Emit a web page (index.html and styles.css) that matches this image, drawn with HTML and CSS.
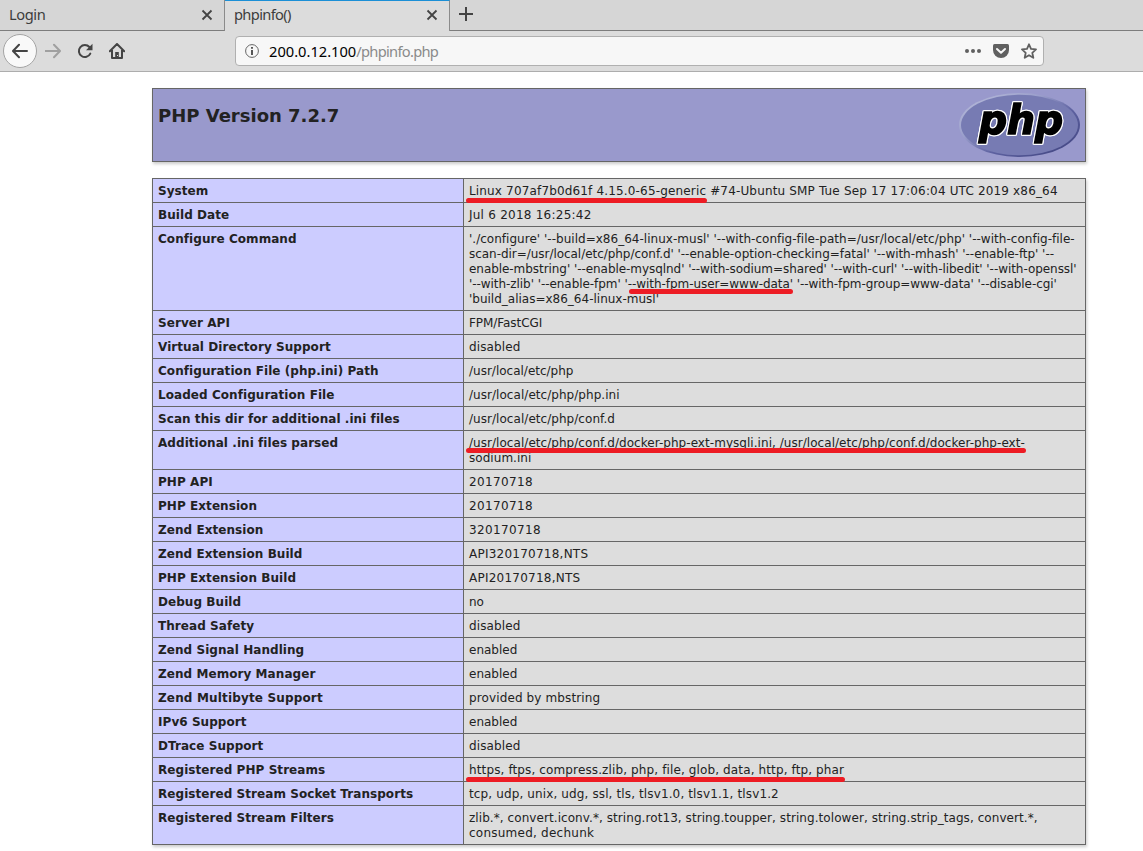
FILE: index.html
```html
<!DOCTYPE html>
<html lang="en">
<head>
<meta charset="utf-8">
<title>phpinfo()</title>
<link rel="stylesheet" href="styles.css">
</head>
<body>
<div class="tabs">
  <div class="tab">
    <span class="tab-title">Login</span>
    <svg class="close" width="12" height="12" viewBox="0 0 12 12"><path d="M1.5 1.5l9 9M10.5 1.5l-9 9"/></svg>
  </div>
  <div class="tab tab-active">
    <span class="tab-title tight">phpinfo()</span>
    <svg class="close" width="12" height="12" viewBox="0 0 12 12"><path d="M1.5 1.5l9 9M10.5 1.5l-9 9"/></svg>
  </div>
  <div class="tab-rest"><svg class="plus" width="14" height="14" viewBox="0 0 14 14"><path d="M7 0v14M0 7h14"/></svg></div>
</div>
<div class="toolbar">
  <div class="back"><svg width="16" height="16" viewBox="0 0 16 16"><path class="ink" d="M15 8H1.5M7 1.8L1 8l6 6.2"/></svg></div>
  <svg class="forward" width="16" height="16" viewBox="0 0 16 16"><path class="ink faint" d="M0 8h14.5M9 1.8L15 8l-6 6.2"/></svg>
  <svg class="reload" width="16" height="16" viewBox="0 0 16 16"><path class="ink" d="M13.3 10.6A6 6 0 1 1 12.4 4"/><path class="solid" d="M15.5 .8v6.4H9z"/></svg>
  <svg class="home" width="16" height="16" viewBox="0 0 16 16"><path class="ink" d="M.8 8.2L8 1l7.200 7.200M3 7v8h10V7"/><path class="solid" d="M6.200 9h3.600v6H6.200z"/><path class="dot" d="M8 12h1v1H8z"/></svg>
  <div class="urlbar">
    <svg class="info" width="14" height="14" viewBox="0 0 14 14"><circle cx="7" cy="7" r="6.400"/><path class="solid" d="M6.100 3h1.800v1.700H6.100zM6.100 6h1.800v5H6.100z"/></svg>
    <span class="url"><span class="host">200.0.12.100</span><span class="path">/phpinfo.php</span></span>
    <svg class="dots" width="16" height="16" viewBox="0 0 16 16"><circle cx="2" cy="8" r="2"/><circle cx="8" cy="8" r="2"/><circle cx="14" cy="8" r="2"/></svg>
    <svg class="pocket" width="16" height="16" viewBox="0 0 16 16"><path d="M1.500 1h13Q16 1 16 2.500V7a8 8 0 0 1-16 0V2.500Q0 1 1.500 1z"/><path class="check" d="M4 6l4 3.800L12 6"/></svg>
    <svg class="star" width="16" height="16" viewBox="0 0 16 16"><path d="M8 1.300l2 4.600 5 .5-3.700 3.400 1 5L8 12.200l-4.300 2.600 1-5L1 6.400l5-.5z"/></svg>
  </div>
</div>
<main class="page">
  <header class="banner">
    <h1>PHP Version 7.2.7</h1>
    <svg class="logo" width="122" height="64" viewBox="0 0 122 64">
      <defs>
        <linearGradient id="rim" x1="0.1" y1="0.2" x2="0.8" y2="0.9"><stop offset="0" stop-color="#aeb2d5"/><stop offset=".3" stop-color="#9a9ecb"/><stop offset=".65" stop-color="#5d61a0"/><stop offset="1" stop-color="#484c89"/></linearGradient>
      </defs>
      <ellipse cx="60.500" cy="32" rx="60.500" ry="32" fill="url(#rim)"/>
      <ellipse cx="60.500" cy="32" rx="58.500" ry="30.300" fill="#777bb3"/>
      <text class="logo-text" x="20" y="40.500" textLength="84" lengthAdjust="spacingAndGlyphs">php</text>
    </svg>
  </header>
  <table>
    <colgroup><col class="key"><col></colgroup>
    <tr><th>System</th><td class="track-4">Linux 707af7b0d61f 4.15.0-65-generic #74-Ubuntu SMP Tue Sep 17 17:06:04 UTC 2019 x86_64</td></tr>
    <tr><th>Build Date</th><td class="track-5">Jul 6 2018 16:25:42</td></tr>
    <tr><th>Configure Command</th><td><span class="track-1">'./configure' '--build=x86_64-linux-musl' '--with-config-file-path=/usr/local/etc/php' '--with-config-file-</span><br><span class="tight-1">scan-dir=/usr/local/etc/php/conf.d' '--enable-option-checking=fatal' '--with-mhash' '--enable-ftp' '--</span><br><span class="tight-2">enable-mbstring' '--enable-mysqlnd' '--with-sodium=shared' '--with-curl' '--with-libedit' '--with-openssl'</span><br><span class="tight-2">'--with-zlib' '--enable-fpm' '--with-fpm-user=www-data' '--with-fpm-group=www-data' '--disable-cgi'</span><br>'build_alias=x86_64-linux-musl'</td></tr>
    <tr><th>Server API</th><td class="tight-2">FPM/FastCGI</td></tr>
    <tr><th>Virtual Directory Support</th><td class="track-3">disabled</td></tr>
    <tr><th>Configuration File (php.ini) Path</th><td>/usr/local/etc/php</td></tr>
    <tr><th>Loaded Configuration File</th><td class="track-2">/usr/local/etc/php/php.ini</td></tr>
    <tr><th>Scan this dir for additional .ini files</th><td class="track-2">/usr/local/etc/php/conf.d</td></tr>
    <tr><th>Additional .ini files parsed</th><td class="track-2">/usr/local/etc/php/conf.d/docker-php-ext-mysqli.ini, /usr/local/etc/php/conf.d/docker-php-ext-<br>sodium.ini</td></tr>
    <tr><th>PHP API</th><td class="track-6">20170718</td></tr>
    <tr><th>PHP Extension</th><td class="track-6">20170718</td></tr>
    <tr><th>Zend Extension</th><td class="track-6">320170718</td></tr>
    <tr><th>Zend Extension Build</th><td class="track-5">API320170718,NTS</td></tr>
    <tr><th>PHP Extension Build</th><td class="track-5">API20170718,NTS</td></tr>
    <tr><th>Debug Build</th><td>no</td></tr>
    <tr><th>Thread Safety</th><td class="track-3">disabled</td></tr>
    <tr><th>Zend Signal Handling</th><td>enabled</td></tr>
    <tr><th>Zend Memory Manager</th><td>enabled</td></tr>
    <tr><th class="track-4">Zend Multibyte Support</th><td class="track-3">provided by mbstring</td></tr>
    <tr><th>IPv6 Support</th><td>enabled</td></tr>
    <tr><th>DTrace Support</th><td class="track-3">disabled</td></tr>
    <tr><th>Registered PHP Streams</th><td class="track-3">https, ftps, compress.zlib, php, file, glob, data, http, ftp, phar</td></tr>
    <tr><th>Registered Stream Socket Transports</th><td class="track-3">tcp, udp, unix, udg, ssl, tls, tlsv1.0, tlsv1.1, tlsv1.2</td></tr>
    <tr><th>Registered Stream Filters</th><td><span class="track-filters">zlib.*, convert.iconv.*, string.rot13, string.toupper, string.tolower, string.strip_tags, convert.*,</span><br><span class="track-5">consumed, dechunk</span></td></tr>
  </table>
</main>
<svg class="marks" width="1143" height="851" viewBox="0 0 1143 851"><path d="M468.500 200.500H704.500M631.500 291.500H790.500M468.500 450.500H1023.500M468.500 779.500H842.500"/></svg>
</body>
</html>
```
FILE: styles.css
```css
* { box-sizing: border-box; }
body {
  margin: 0;
  height: 851px;
  overflow: hidden;
  position: relative;
  background: #fff;
  color: #222;
  font-family: "DejaVu Sans", sans-serif;
}
svg { display: block; flex: none; }

/* Browser chrome */
.tabs {
  display: flex;
  height: 31px;
  background: #d6d6d6;
  font: 14.67px/20px "Noto Sans", sans-serif;
  color: #3c3c3c;
}
.tab {
  display: flex;
  justify-content: space-between;
  width: 225px;
  padding: 4px 11px 0 9px;
  border-right: 1px solid #8b8b8b;
  border-bottom: 1px solid #7d7d7d;
}
.tab-title { letter-spacing: -0.4px; }
.tab-title.tight { letter-spacing: -0.65px; }
.tab-active {
  padding-top: 3px;
  border-top: 1px solid #1b8fd6;
  border-bottom: 0;
  background: #dcdcdc;
}
.close { margin-top: 5px; fill: none; stroke: #444; stroke-width: 1.8; }
.tab-rest { flex: 1; border-bottom: 1px solid #7d7d7d; padding: 7px 0 0 9px; }
.plus { stroke: #444; stroke-width: 2; }
.toolbar {
  display: flex;
  align-items: center;
  height: 41px;
  padding-left: 3px;
  border-bottom: 1px solid #adadad;
  background: #dcdcdc;
}
.back {
  display: grid;
  place-items: center;
  width: 34px;
  height: 34px;
  border: 1px solid #a4a4a4;
  border-radius: 50%;
  background: #f9f9f9;
}
.ink { fill: none; stroke: #444; stroke-width: 2; stroke-linejoin: round; stroke-linecap: round; }
.faint { stroke: #a0a0a0; }
.solid { fill: #444; }
.dot { fill: #dcdcdc; }
.forward { margin-left: 8px; }
.reload { margin-left: 16px; }
.home { margin-left: 16px; }
.urlbar {
  display: flex;
  align-items: center;
  width: 809px;
  height: 30px;
  margin-left: 110px;
  padding: 0 6px 0 9px;
  border: 1px solid #b0b0b0;
  border-radius: 4px;
  background: #f7f7f7;
}
.info circle { fill: none; stroke: #666; stroke-width: 1; }
.url { flex: 1; margin-left: 10px; font: 14.67px/20px "Noto Sans", sans-serif; }
.host { color: #000; }
.path { color: #8a8a8a; letter-spacing: -0.7px; }
.dots, .pocket { fill: #606060; }
.pocket { margin-left: 12px; }
.check { fill: none; stroke: #f7f7f7; stroke-width: 2; stroke-linecap: round; stroke-linejoin: round; }
.star { margin-left: 12px; fill: none; stroke: #606060; stroke-width: 1.8; stroke-linejoin: round; }

/* Page content */
.page { width: 934px; margin: 16px 0 0 152px; }
.banner {
  display: flex;
  justify-content: space-between;
  height: 74px;
  margin-bottom: 16px;
  padding: 4px 4px 0 5px;
  border: 1px solid #666;
  background: #99c;
  box-shadow: 1px 2px 3px #ccc;
}
h1 { margin: 12px 0 0; font-size: 18px; line-height: 21px; }
.logo-text {
  font: italic bold 40px "DejaVu Sans", sans-serif;
  fill: #000;
  stroke: #000;
  stroke-width: 1.6px;
  filter: drop-shadow(1px 0 0 #fff) drop-shadow(-1px 0 0 #fff) drop-shadow(0 1px 0 #fff) drop-shadow(0 -1px 0 #fff);
}
table {
  width: 934px;
  table-layout: fixed;
  border-collapse: collapse;
  box-shadow: 1px 2px 3px #ccc;
  font-size: 12px;
  line-height: 15px;
}
.key { width: 311px; }
th, td {
  padding: 5px 5px 3px;
  border: 1px solid #666;
  text-align: left;
  vertical-align: baseline;
  white-space: nowrap;
}
th { background: #ccf; font-weight: bold; letter-spacing: 0.06px; }
td { background: #ddd; }

/* Text tracking steps */
.tight-2 { letter-spacing: -0.055px; }
.tight-1 { letter-spacing: -0.04px; }
.track-1 { letter-spacing: 0.024px; }
.track-2 { letter-spacing: 0.045px; }
.track-filters { letter-spacing: 0.07px; }
.track-3 { letter-spacing: 0.125px; }
.track-4 { letter-spacing: 0.16px; }
.track-5 { letter-spacing: 0.24px; }
.track-6 { letter-spacing: 0.36px; }

/* Red highlighter strokes over the table */
.marks { position: absolute; left: 0; top: 0; pointer-events: none; }
.marks path { fill: none; stroke: #ed1c24; stroke-width: 5; stroke-linecap: round; }
```
